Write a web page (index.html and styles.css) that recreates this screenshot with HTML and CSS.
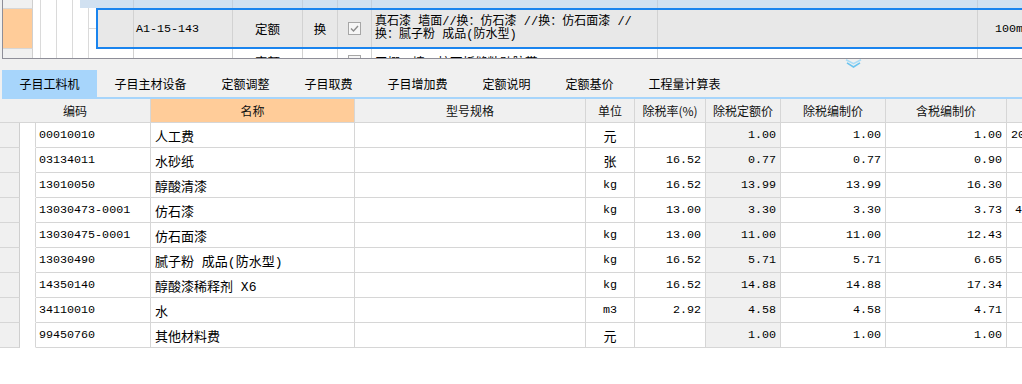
FILE: index.html
```html
<!DOCTYPE html>
<html lang="zh-CN">
<head>
<meta charset="utf-8">
<title>子目工料机</title>
<link rel="stylesheet" href="styles.css">
</head>
<body>
<div class="top-pane">
  <div class="top-scroll">
    <div class="trow trow-parent">
      <div class="rh"></div>
      <div class="tree">
        <span class="g g8"></span><span class="g g16"></span><span class="g g16"></span><span class="g g7"></span>
      </div>
      <div class="tcells parent">
        <div class="tc c-lead-p"></div>
        <div class="tc c-code"></div>
        <div class="tc c-type"></div>
        <div class="tc c-huan"></div>
        <div class="tc c-chk"></div>
        <div class="tc c-desc"></div>
        <div class="tc c-work">清理基层、满刮腻子、打磨砂纸、喷涂真石漆</div>
        <div class="tc c-last"></div>
      </div>
    </div>
    <div class="trow trow-sel">
      <div class="rh"></div>
      <div class="tree">
        <span class="g g8"></span><span class="g g16"></span><span class="g g16"></span><span class="g g16"></span><span class="g conn"></span>
      </div>
      <div class="tcells sel">
        <div class="tc c-lead-s"></div>
        <div class="tc c-code mono">A1-15-143</div>
        <div class="tc c-type">定额</div>
        <div class="tc c-huan">换</div>
        <div class="tc c-chk"><span class="chk"><svg viewBox="0 0 11 11" width="11" height="11"><polyline points="2,5.5 4.5,8 9,3" fill="none" stroke="#8c8c8c" stroke-width="1.4"/></svg></span></div>
        <div class="tc c-desc"><span class="desc-text">真石漆 墙面//换：仿石漆 //换：仿石面漆 //<br>换：腻子粉 成品(防水型)</span></div>
        <div class="tc c-work"></div>
        <div class="tc c-last mono">100m2</div>
      </div>
    </div>
    <div class="trow trow-next">
      <div class="rh"></div>
      <div class="tree">
        <span class="g g8"></span><span class="g g16"></span><span class="g g16"></span><span class="g g16"></span><span class="g g7"></span>
      </div>
      <div class="tcells next">
        <div class="tc c-lead-n"></div>
        <div class="tc c-code mono">A1-15-183</div>
        <div class="tc c-type">定额</div>
        <div class="tc c-huan"></div>
        <div class="tc c-chk"><span class="chk"><svg viewBox="0 0 11 11" width="11" height="11"><polyline points="2,5.5 4.5,8 9,3" fill="none" stroke="#8c8c8c" stroke-width="1.4"/></svg></span></div>
        <div class="tc c-desc">天棚、墙、柱面板缝粘贴胶带</div>
        <div class="tc c-work"></div>
        <div class="tc c-last mono">100m2</div>
      </div>
    </div>
  </div>
</div>

<div class="splitter">
  <svg class="chevron" viewBox="0 0 17 9" width="17" height="9"><polyline points="1,0.8 8.5,4.6 16,0.8" fill="none" stroke="#a9dcf6" stroke-width="1.6"/><polyline points="2,3.8 8.5,8 15,3.8" fill="none" stroke="#6cc4ef" stroke-width="1.6"/></svg>
</div>

<div class="tabs">
  <div class="tab active">子目工料机</div>
  <div class="tab">子目主材设备</div>
  <div class="tab">定额调整</div>
  <div class="tab">子目取费</div>
  <div class="tab">子目增加费</div>
  <div class="tab">定额说明</div>
  <div class="tab">定额基价</div>
  <div class="tab">工程量计算表</div>
</div>
<div class="tab-line"></div>

<div class="grid">
  <table>
    <colgroup>
      <col class="w-rh"><col class="w-tr"><col class="w-code"><col class="w-name"><col class="w-spec"><col class="w-unit"><col class="w-rate"><col class="w-quota"><col class="w-price"><col class="w-tax"><col class="w-extra">
    </colgroup>
    <thead>
      <tr class="head">
        <th colspan="3">编码</th>
        <th class="name">名称</th>
        <th>型号规格</th>
        <th>单位</th>
        <th>除税率(%)</th>
        <th>除税定额价</th>
        <th>除税编制价</th>
        <th>含税编制价</th>
        <th></th>
      </tr>
    </thead>
    <tbody>
      <tr><td class="rh2"></td><td class="trc"></td><td class="code">00010010</td><td class="nm">人工费</td><td></td><td class="unit">元</td><td class="num"></td><td class="num quota">1.00</td><td class="num">1.00</td><td class="num">1.00</td><td class="num">2055.12340</td></tr>
      <tr><td class="rh2"></td><td class="trc"></td><td class="code">03134011</td><td class="nm">水砂纸</td><td></td><td class="unit">张</td><td class="num">16.52</td><td class="num quota">0.77</td><td class="num">0.77</td><td class="num">0.90</td><td class="num">6.000000</td></tr>
      <tr><td class="rh2"></td><td class="trc"></td><td class="code">13010050</td><td class="nm">醇酸清漆</td><td></td><td class="unit mono">kg</td><td class="num">16.52</td><td class="num quota">13.99</td><td class="num">13.99</td><td class="num">16.30</td><td class="num">0.140000</td></tr>
      <tr><td class="rh2"></td><td class="trc"></td><td class="code">13030473-0001</td><td class="nm">仿石漆</td><td></td><td class="unit mono">kg</td><td class="num">13.00</td><td class="num quota">3.30</td><td class="num">3.30</td><td class="num">3.73</td><td class="num">4.1234567</td></tr>
      <tr><td class="rh2"></td><td class="trc"></td><td class="code">13030475-0001</td><td class="nm">仿石面漆</td><td></td><td class="unit mono">kg</td><td class="num">13.00</td><td class="num quota">11.00</td><td class="num">11.00</td><td class="num">12.43</td><td class="num">0.180000</td></tr>
      <tr><td class="rh2"></td><td class="trc"></td><td class="code">13030490</td><td class="nm">腻子粉 成品(防水型)</td><td></td><td class="unit mono">kg</td><td class="num">16.52</td><td class="num quota">5.71</td><td class="num">5.71</td><td class="num">6.65</td><td class="num">0.200000</td></tr>
      <tr><td class="rh2"></td><td class="trc"></td><td class="code">14350140</td><td class="nm">醇酸漆稀释剂 X6</td><td></td><td class="unit mono">kg</td><td class="num">16.52</td><td class="num quota">14.88</td><td class="num">14.88</td><td class="num">17.34</td><td class="num">0.020000</td></tr>
      <tr><td class="rh2"></td><td class="trc"></td><td class="code">34110010</td><td class="nm">水</td><td></td><td class="unit mono">m3</td><td class="num">2.92</td><td class="num quota">4.58</td><td class="num">4.58</td><td class="num">4.71</td><td class="num">0.010000</td></tr>
      <tr><td class="rh2"></td><td class="trc"></td><td class="code">99450760</td><td class="nm">其他材料费</td><td></td><td class="unit">元</td><td class="num"></td><td class="num quota">1.00</td><td class="num">1.00</td><td class="num">1.00</td><td class="num">0.500000</td></tr>
    </tbody>
  </table>
</div>
</body>
</html>
```

FILE: styles.css
```css
* { box-sizing: border-box; }
html, body { margin: 0; padding: 0; }
body {
  width: 1022px;
  height: 384px;
  overflow: hidden;
  background: #f0f0f0;
  font-family: "Noto Sans CJK SC", sans-serif;
  font-size: 12px;
  color: #000;
}

.mono { font-family: "Liberation Mono", "Noto Sans CJK SC", monospace; font-size: 11.7px; }

/* ---------- top pane ---------- */
.top-pane {
  margin-left: 2px;
  height: 59px;
  border-left: 1px solid #8e8e98;
  border-bottom: 1px solid #8e8e98;
  background: #fff;
  overflow: hidden;
}
.top-scroll { margin-top: -21px; display: flex; flex-direction: column; }
.trow { display: flex; flex: none; }
.trow-parent { height: 29px; }
.trow-sel { height: 41px; }
.trow-next { height: 25px; }

.rh { width: 30px; flex: none; background: #f0f0f0; border-right: 1px solid #cfcfcf; }
.trow-sel .rh { background: #ffcc99; border-top: 1px solid #d6d6d6; border-bottom: 1px solid #d6d6d6; }

.tree { display: flex; flex: none; background: #fff; }
.g { flex: none; height: 100%; border-right: 1px solid #dadada; }
.g8 { width: 8px; }
.g16 { width: 16px; }
.g7 { width: 7px; border-right: 0; }
.conn {
  width: 7px;
  border-right: 0;
  background: linear-gradient(#dadada, #dadada) 0 20px / 100% 1px no-repeat;
}

.tcells { display: flex; flex: none; width: 1100px; }
.tcells.parent { background: #d1e1f1; }
.tcells.sel { border: 2px solid #1a84ee; background: #e8e8e8; }
.tcells.next { background: #fff; }

.tc {
  flex: none;
  height: 100%;
  border-right: 1px solid #d2d2d2;
  display: flex;
  align-items: center;
  font-family: "Liberation Mono", "Noto Sans CJK SC", monospace;
  font-size: 12.5px;
  white-space: nowrap;
  overflow: hidden;
}
.parent .tc { border-right-color: #c3d0de; }

.c-lead-p { width: 54px; }
.c-lead-s { width: 36px; }
.c-lead-n { width: 38px; }
.c-code { width: 99px; padding-left: 2px; font-size: 11.7px; }
.c-type { width: 70px; justify-content: center; }
.c-huan { width: 35px; justify-content: center; }
.c-chk { width: 34px; justify-content: center; }
.c-desc { width: 286px; padding-left: 3px; }
.c-work { width: 320px; padding-left: 21px; }
.c-last { width: 100px; padding-left: 17px; border-right: 0; font-size: 11.7px; }

.desc-text { line-height: 12.5px; font-size: 12px; }

.chk {
  width: 13px;
  height: 13px;
  border: 1px solid #a6a6a6;
  background: #f6f6f6;
  display: flex;
  align-items: center;
  justify-content: center;
}
.chk svg { display: block; }

/* ---------- splitter ---------- */
.splitter { height: 11px; display: flex; align-items: flex-start; }
.chevron { display: block; margin-left: 845px; }

/* ---------- tabs ---------- */
.tabs { display: flex; height: 27px; margin-left: 2px; }
.tab {
  padding: 0 17.5px;
  line-height: 27px;
  font-size: 12px;
  color: #000;
  white-space: nowrap;
}
.tab.active { background: #a7d5fb; }
.tab-line { height: 2px; margin-left: 2px; background: #a7d5fb; }

/* ---------- grid ---------- */
.grid {
  width: 1022px;
  height: 285px;
  background: #fff;
  overflow: hidden;
}
.grid table {
  border-collapse: separate;
  border-spacing: 0;
  table-layout: fixed;
  width: 1083px;
}
.w-rh { width: 20px; }
.w-tr { width: 16px; }
.w-code { width: 115px; }
.w-name { width: 204px; }
.w-spec { width: 231px; }
.w-unit { width: 49px; }
.w-rate { width: 71px; }
.w-quota { width: 75px; }
.w-price { width: 105px; }
.w-tax { width: 121px; }
.w-extra { width: 76px; }

.grid tr.head { height: 24px; }
.grid tbody tr { height: 25px; }

.grid th {
  padding: 0;
  background: #f0f0f0;
  border-right: 1px solid #d6d6d6;
  border-bottom: 1px solid #d6d6d6;
  font-weight: normal;
  font-size: 12px;
  color: #111;
  text-align: center;
  white-space: nowrap;
  overflow: hidden;
}
.grid th.name { background: #ffcc99; }

.grid td {
  padding: 0 4px;
  border-right: 1px solid #d6d6d6;
  border-bottom: 1px solid #d6d6d6;
  white-space: nowrap;
  overflow: hidden;
  font-family: "Liberation Mono", "Noto Sans CJK SC", monospace;
  font-size: 11.7px;
}
.grid td.rh2 { background: #f0f0f0; border-right-color: #cfcfcf; }
.grid td.trc { border-bottom-color: #fff; }
.grid td.code { padding-left: 3px; }
.grid td.nm { font-size: 13px; padding-left: 4px; }
.grid td.unit { text-align: center; font-size: 13px; }
.grid td.unit.mono { font-size: 11.7px; }
.grid td.num { text-align: right; padding-right: 4px; }
.grid td.quota { background: #f0f0f0; }
```
